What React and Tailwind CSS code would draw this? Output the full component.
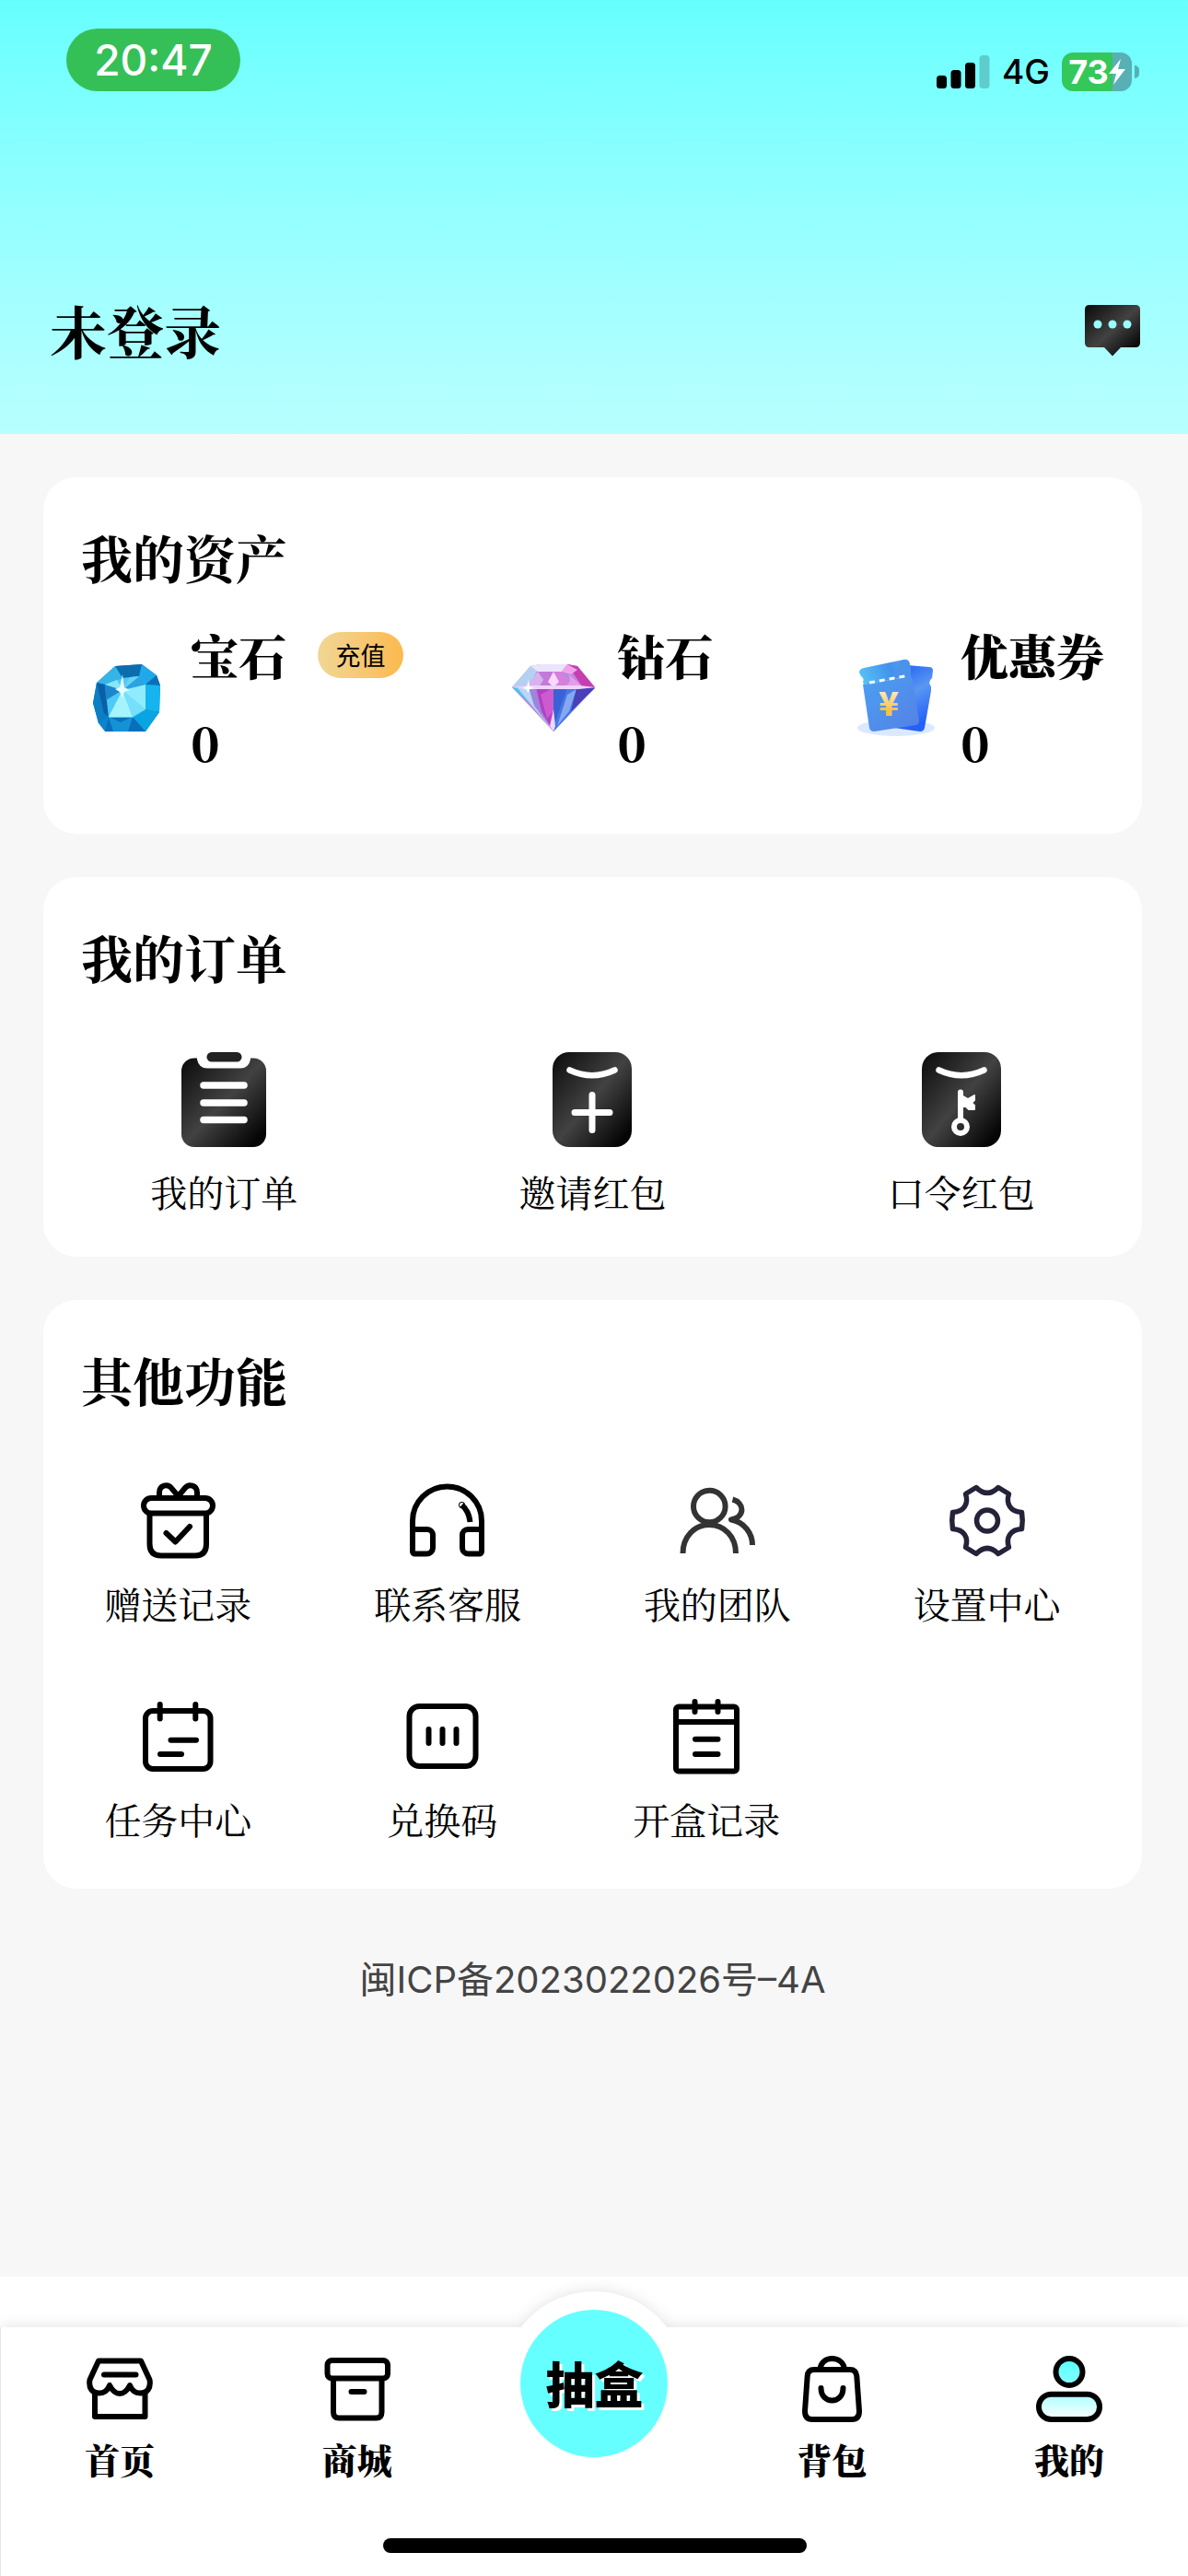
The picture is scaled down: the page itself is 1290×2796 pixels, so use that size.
const otherFeatures = [
  [
    { label: '赠送记录', icon: GiftIcon },
    { label: '联系客服', icon: HeadphonesIcon },
    { label: '我的团队', icon: TeamIcon },
    { label: '设置中心', icon: GearIcon },
  ],
  [
    { label: '任务中心', icon: CalendarIcon },
    { label: '兑换码', icon: CodeIcon, narrow: true },
    { label: '开盒记录', icon: NotebookIcon },
  ],
];

const orders = [
  { label: '我的订单', icon: ClipboardIcon },
  { label: '邀请红包', icon: InviteIcon },
  { label: '口令红包', icon: PasswordIcon },
];

function LineIcon({ color = '#000', size = 90, children }) {
  return (
    <svg
      width={size}
      height={size}
      viewBox={`0 0 ${size} ${size}`}
      fill="none"
      stroke={color}
      strokeWidth="6"
      strokeLinecap="round"
      strokeLinejoin="round"
      aria-hidden="true"
    >
      {children}
    </svg>
  );
}

function GiftIcon() {
  return (
    <LineIcon>
      <path d="M25 19V14C25 6 34 4 38 9L45.5 18L53 9C57 4 66 6 66 14V19" />
      <rect x="8" y="20" width="75" height="16.5" rx="8.2" />
      <path d="M14.5 38V70Q14.5 82.5 27 82.5H64Q76 82.5 76 70V38" />
      <path d="M32.5 58L42.5 67.5L58 51" />
    </LineIcon>
  );
}

function HeadphonesIcon() {
  return (
    <LineIcon>
      <path d="M7 54V45A37.5 37.5 0 0 1 82 45V54" />
      <path d="M7 54H23A6 6 0 0 1 29 60V74A6.5 6.5 0 0 1 22.5 80.5H9.5A2.5 2.5 0 0 1 7 78Z" />
      <path d="M82 54H67A6 6 0 0 0 61 60V74A6.5 6.5 0 0 0 67.5 80.5H79.5A2.5 2.5 0 0 0 82 78Z" />
      <path d="M60.5 27.5Q68 34 69.5 46" strokeLinecap="butt" />
      <circle cx="60.5" cy="27.5" r="0.5" />
    </LineIcon>
  );
}

function TeamIcon() {
  return (
    <LineIcon color="#333">
      <g strokeLinecap="butt">
        <circle cx="36.3" cy="29" r="17.3" />
        <path d="M7.5 80C7.5 62 20 49 36.3 49S65 62 65 80" />
        <path d="M61.5 21.5C74 25 76 40 60 43.5C74 46 83 58 83 71" />
      </g>
    </LineIcon>
  );
}

function GearIcon() {
  return (
    <LineIcon color="#25233a">
      <circle cx="45" cy="44.5" r="11.5" strokeWidth="5.5" />
      <path
        strokeWidth="5.5"
        d="M33 8.5L21.5 15.5C25 26 20 35 7.500 35.500Q6 44.5 7.500 53.500C20 54 25 63 21.5 73.5L33 80.5C41 72.5 49 72.5 57 80.5L68.5 73.5C65 63 70 54 82.500 53.500Q84 44.500 82.500 35.500C70 35 65 26 68.5 15.5L57 8.5C49 16.500 41 16.500 33 8.5Z"
      />
    </LineIcon>
  );
}

function CalendarIcon() {
  return (
    <LineIcon>
      <rect x="10" y="17" width="70.5" height="63" rx="8" />
      <path d="M25.7 10V25.5M64.3 10V25.5M37.5 48.7H65M26 64H49" />
    </LineIcon>
  );
}

function CodeIcon() {
  return (
    <LineIcon>
      <rect x="9.5" y="12" width="72" height="65" rx="11" />
      <path d="M30.5 37V52M45.5 37V52M60.5 37V52" />
    </LineIcon>
  );
}

function NotebookIcon() {
  return (
    <LineIcon>
      <rect x="12" y="12.5" width="66" height="70" rx="3" />
      <path d="M12 29H78M32.5 7V18M57.5 7V18M33 47.7H57.5M33 64H57.5" />
    </LineIcon>
  );
}

function DarkGradient({ id }) {
  return (
    <linearGradient id={id} x1="0" y1="0" x2="1" y2="1">
      <stop offset="0" stopColor="#0a0a0a" />
      <stop offset="0.5" stopColor="#424242" />
      <stop offset="0.9" stopColor="#050505" />
    </linearGradient>
  );
}

function ClipboardIcon() {
  return (
    <svg width="92" height="103" viewBox="0 0 92 103" aria-hidden="true">
      <defs>
        <DarkGradient id="clipboard" />
      </defs>
      <rect y="6.5" width="92" height="96.5" rx="14" fill="url(#clipboard)" />
      <path d="M17 0V8Q19 17.5 28 17.5H64Q73 17.5 75 8V0Z" fill="#fff" />
      <rect x="27.5" width="38" height="10.5" rx="5.2" fill="#222" />
      <path d="M24 36H68M24 55H68M24 73.5H68" stroke="#fff" strokeWidth="7.5" strokeLinecap="round" />
    </svg>
  );
}

function InviteIcon() {
  return (
    <svg width="86" height="103" viewBox="0 0 86 103" fill="none" stroke="#fff" strokeLinecap="round" aria-hidden="true">
      <defs>
        <DarkGradient id="invite" />
      </defs>
      <rect width="86" height="103" rx="18" fill="url(#invite)" stroke="none" />
      <path d="M18.5 19.5Q43 31 67.5 19.5" strokeWidth="6.5" />
      <path d="M43 46.5V84.5M24 65.5H62" strokeWidth="7" />
    </svg>
  );
}

function PasswordIcon() {
  return (
    <svg width="86" height="103" viewBox="0 0 86 103" fill="none" stroke="#fff" strokeLinecap="round" aria-hidden="true">
      <defs>
        <DarkGradient id="password" />
      </defs>
      <rect width="86" height="103" rx="18" fill="url(#password)" stroke="none" />
      <path d="M18.5 19.5Q43 31 67.5 19.5" strokeWidth="6.5" />
      <path d="M42 43.5V73" strokeWidth="6" />
      <circle cx="42" cy="81" r="7" strokeWidth="6" />
      <path d="M43 47L50 51L57 47V52L54 55L57 58V62H51L48 59H43Z" fill="#fff" strokeWidth="2" strokeLinejoin="round" />
    </svg>
  );
}

function ChatIcon() {
  return (
    <svg width="60" height="56" viewBox="0 0 60 56" aria-hidden="true">
      <defs>
        <DarkGradient id="chat" />
      </defs>
      <path d="M5 0H55Q60 0 60 5V41Q60 46 55 46H39L30 55.5L21 46H5Q0 46 0 41V5Q0 0 5 0Z" fill="url(#chat)" />
      <g fill="#9ff">
        <circle cx="14" cy="21" r="4.5" />
        <circle cx="30" cy="21" r="4.5" />
        <circle cx="46" cy="21" r="4.5" />
      </g>
    </svg>
  );
}

function GemIcon() {
  return (
    <svg width="92" height="92" viewBox="0 0 92 92" aria-hidden="true">
      <path d="M34 11L63 9L79 21L83 32L82 61L67 82H23L16 73L10 51L14 29Z" fill="#0a86cf" />
      <path d="M34 11L63 9L60 22L42 24Z" fill="#0b6cae" />
      <path d="M34 11L42 24L23 31L14 29Z" fill="#35b4e8" />
      <path d="M63 9L79 21L67 31L60 22Z" fill="#1fa9ea" />
      <path d="M79 21L83 32L67 31Z" fill="#0b6fb8" />
      <path d="M83 32L82 61L67 58V31Z" fill="#15b4ee" />
      <path d="M82 61L67 82L53 67L67 58Z" fill="#0aa4e2" />
      <path d="M67 82H23L27 66H53Z" fill="#0a6fbb" />
      <path d="M27 66L40 72L53 66L48 82H32Z" fill="#1592d6" />
      <path d="M16 73L10 51L14 29L22 40L27 66Z" fill="#0c7fc4" />
      <path d="M14 29L23 31L27 66L22 62Z" fill="#0a5fa6" />
      <path d="M23 31L42 24L60 22L67 31V58L53 67H27Z" fill="#4fc9f6" />
      <path d="M42 37L27 66H53Z" fill="#a5f3fd" />
      <path d="M42 37L53 66L67 58Z" fill="#74e0fb" />
      <path d="M42 37L67 31V58Z" fill="#8fecfd" />
      <path d="M42 37L60 22L67 31Z" fill="#2ba3e0" />
      <path d="M42 37L50 23L60 22Z" fill="#69d3f5" />
      <path d="M42 37L23 31L24 48Z" fill="#1d87cd" />
      <path d="M42 37L23 31L36 26Z" fill="#8ae4fa" />
      <path d="M42 20L44 34L50 37L44 39L42 46L39 39L34 36L39 34Z" fill="#e5fdff" />
    </svg>
  );
}

function DiamondIcon() {
  return (
    <svg width="92" height="92" viewBox="0 0 92 92" aria-hidden="true">
      <path d="M22 11L33 9H62L73 11L92 34L47 82L2 34Z" fill="#b98ae0" />
      <path d="M22 11L33 9L20 34H2Z" fill="#b5d0f3" />
      <path d="M22 11L33 9H62L56 17H30Z" fill="#ece4fb" />
      <path d="M62 9L73 11L92 34L78 33L68 18Z" fill="#c53fb0" />
      <path d="M56 17L62 9L73 15L66 20Z" fill="#f0a3ea" />
      <path d="M30 17L36 26L31 34L18 33Z" fill="#d8b2ee" />
      <path d="M30 17H47V34H31L37 25Z" fill="#c37ad9" />
      <path d="M47 17H56L64 27L60 34H47Z" fill="#d67fdd" />
      <path d="M47 17L53 28L47 34L41 28Z" fill="#fbd8f8" />
      <path d="M64 20L78 33L60 34L65 27Z" fill="#e79be8" />
      <path d="M2 34H20L30 59Z" fill="#4cc3ec" />
      <path d="M8 35L20 34L47 82Z" fill="#b9d6f7" />
      <path d="M20 34H28L47 82L26 54Z" fill="#9c86dd" />
      <path d="M28 34H47V82L34 60Z" fill="#b63fc1" />
      <path d="M33 42L47 34V60L40 68Z" fill="#cc5bcf" />
      <path d="M47 34H92L47 82Z" fill="#4478e2" />
      <path d="M47 34H62L58 46L47 76Z" fill="#3a62d6" />
      <path d="M62 42L72 36L64 60L51 76Z" fill="#86a8f3" />
      <path d="M72 35H92L66 60Z" fill="#4b40b8" />
      <path d="M47 58L49 76L47 82L43 76Z" fill="#f1d5fa" />
      <path d="M2 34L20 32H75L92 34L75 36H20Z" fill="#eed3fa" />
      <path d="M20 26L21 33L26 35L21 36L20 40L17 36L13 35L18 33Z" fill="#fff" />
    </svg>
  );
}

function CouponIcon() {
  return (
    <svg width="92" height="92" viewBox="0 0 92 92" aria-hidden="true">
      <defs>
        <linearGradient id="couponTop" x1="0" y1="0.5" x2="1" y2="0.3">
          <stop offset="0" stopColor="#56c1f3" />
          <stop offset="0.6" stopColor="#4291ec" />
          <stop offset="1" stopColor="#5aa3f2" />
        </linearGradient>
        <linearGradient id="couponFront" x1="0" y1="0" x2="1" y2="1">
          <stop offset="0" stopColor="#4aa0f2" />
          <stop offset="1" stopColor="#5580e6" />
        </linearGradient>
        <linearGradient id="couponBack" x1="0" y1="0" x2="0.3" y2="1">
          <stop offset="0" stopColor="#1d5df5" />
          <stop offset="0.5" stopColor="#5a97f2" />
          <stop offset="1" stopColor="#2460f8" />
        </linearGradient>
        <linearGradient id="yuan" x1="0" y1="0" x2="0" y2="1">
          <stop offset="0.2" stopColor="#fff3d6" />
          <stop offset="0.7" stopColor="#f9bf43" />
        </linearGradient>
      </defs>
      <ellipse cx="46" cy="78" rx="42" ry="9" fill="#dbe9ff" />
      <path d="M58 10L82 12Q86 12 86 16L85 24Q80 28 84 33L84 38L77 78Q76 82 72 82L44 78Z" fill="url(#couponBack)" />
      <path d="M11 13L54 4Q60 3 61 9L62 22L11 31L10 28Q12 25 8 22L6 18Q6 14 11 13Z" fill="url(#couponTop)" />
      <path d="M39 24Q47 18 51 5L56 4Q60 4 61 9L62 22Z" fill="#4a93ea" />
      <path d="M10 31L62 22Q64 24 64 28L71 70Q71 75 67 75L22 82Q18 82 17 78Z" fill="url(#couponFront)" />
      <path d="M17 29L60 21" stroke="#fff" strokeWidth="3" strokeDasharray="6 5" />
      <text x="38" y="65" textAnchor="middle" fontSize="36" fontWeight="900" fontFamily="Noto Sans CJK SC, sans-serif" fill="url(#yuan)">
        ¥
      </text>
    </svg>
  );
}

function ShopIcon() {
  return (
    <LineIcon size={72}>
      <path d="M13 5.5H59L68.5 26C70 35 66 40.5 58 40.5C53 40.5 49 37 47 32C44 38 41 41 36 41S28 38 25 32C23 37 19 40.5 14 40.5C6 40.5 2 35 3.5 26Z" />
      <path d="M9 41V66H63.5V41M19 20.5H53.5" />
    </LineIcon>
  );
}

function MallIcon() {
  return (
    <LineIcon size={72}>
      <rect x="3.5" y="5" width="65.5" height="19.5" rx="5" />
      <path d="M10 26V61Q10 67.5 16 67.5H56.5Q62.5 67.5 62.5 61V26M29.5 39H43.5" />
    </LineIcon>
  );
}

function BagIcon() {
  return (
    <LineIcon size={72}>
      <path d="M17 15H56Q62.5 15 63.3 22L66 60Q66 69 58 69H15Q7 69 7 60L9.7 22Q10.3 15 17 15Z" />
      <path d="M23.5 15C24 7 30 3 36.5 3S49.5 7 50 15" />
      <path d="M24.5 35C24.5 53 48.5 53 48.5 35" />
    </LineIcon>
  );
}

function MeIcon() {
  return (
    <LineIcon size={72}>
      <defs>
        <linearGradient id="meHead" x1="0" y1="0" x2="0" y2="1">
          <stop offset="0" stopColor="#5ff" />
          <stop offset="1" stopColor="#8ff" />
        </linearGradient>
        <linearGradient id="meBody" x1="0" y1="0" x2="0" y2="1">
          <stop offset="0" stopColor="#aff" />
          <stop offset="1" stopColor="#fff" />
        </linearGradient>
      </defs>
      <circle cx="36" cy="17.5" r="14.5" fill="url(#meHead)" />
      <rect x="3" y="41.7" width="66" height="27.3" rx="13.6" fill="url(#meBody)" />
    </LineIcon>
  );
}

function StatusBar() {
  return (
    <div className="flex items-end justify-between pt-[31px] pr-[53px] pl-[72px] font-['Inter',sans-serif]">
      <span className="flex h-[68px] w-[189px] items-center justify-center rounded-full bg-[#35c057] text-[46px] font-medium text-white">
        20:47
      </span>
      <div className="flex items-center gap-[13px]">
        <svg width="58" height="36" viewBox="0 0 58 36" aria-hidden="true">
          <rect y="22" width="11" height="14" rx="3.5" />
          <rect x="15.5" y="16" width="11" height="20" rx="3.5" />
          <rect x="31" y="8" width="11" height="28" rx="3.5" />
          <rect x="46.5" width="11" height="36" rx="3.5" opacity="0.2" />
        </svg>
        <span className="text-[37px] leading-[42px] font-medium">4G</span>
        <div className="flex items-center gap-[3px]">
          <div className="flex h-[42px] w-[76px] items-center justify-center rounded-[12px] bg-linear-to-r from-[#34c759] from-73% to-[#58b0b4] to-73% text-[36px] font-bold text-white">
            73
            <svg width="18" height="28" viewBox="0 0 18 28" fill="#fff" aria-hidden="true">
              <path d="M13 0L0 16H8L5 28L18 11H10Z" />
            </svg>
          </div>
          <div className="h-[14px] w-[5px] rounded-r-full bg-[#58b0b4]" />
        </div>
      </div>
    </div>
  );
}

function Card({ title, children }) {
  return (
    <section className="rounded-[36px] bg-white pt-[50px]">
      <h2 className="pl-[41px] text-[56px] leading-[72px] font-bold">{title}</h2>
      {children}
    </section>
  );
}

function Asset({ icon, name, action }) {
  return (
    <div className="flex items-center gap-6">
      {icon}
      <div className="text-[52px] leading-[94px] font-black whitespace-nowrap">
        <div className="flex items-center gap-[34px]">
          {name}
          {action}
        </div>
        <div>0</div>
      </div>
    </div>
  );
}

function Tab({ label, icon }) {
  return (
    <a href="#" className="flex flex-1 flex-col items-center gap-4 pt-[31px]">
      {icon}
      <span className="text-[38px] leading-[48px] font-black">{label}</span>
    </a>
  );
}

export default function App() {
  return (
    <div className="flex min-h-screen flex-col bg-[#f7f7f7] font-['Noto_Serif_CJK_SC','Noto_Sans_CJK_SC',serif] text-black">
      <header className="bg-linear-to-b from-[#66ffff] to-[#b8ffff] pb-[72px]">
        <StatusBar />
        <div className="mt-[220px] flex items-center justify-between pr-[52px] pl-[54px]">
          <h1 className="text-[62px] leading-[80px] font-bold">未登录</h1>
          <button type="button" aria-label="消息">
            <ChatIcon />
          </button>
        </div>
      </header>

      <main className="flex flex-1 flex-col gap-[47px] pt-[47px] pr-[50px] pl-[47px]">
        <Card title="我的资产">
          <div className="mt-6 grid grid-cols-[46fr_37fr_27fr] pr-[41px] pb-[53px] pl-[44px]">
            <Asset
              icon={<GemIcon />}
              name="宝石"
              action={
                <button
                  type="button"
                  className="h-[50px] w-[93px] rounded-full bg-linear-to-r from-[#f0d795] to-[#fcb94d] font-['Noto_Sans_CJK_SC',sans-serif] text-[27px] leading-[50px] font-normal"
                >
                  充值
                </button>
              }
            />
            <Asset icon={<DiamondIcon />} name="钻石" />
            <Asset icon={<CouponIcon />} name="优惠券" />
          </div>
        </Card>

        <Card title="我的订单">
          <div className="-mx-1 mt-[68px] grid grid-cols-3 pb-[43px]">
            {orders.map(({ label, icon: Icon }) => (
              <a key={label} href="#" className="flex flex-col items-center gap-5">
                <Icon />
                <span className="text-[40px] leading-[56px]">{label}</span>
              </a>
            ))}
          </div>
        </Card>

        <Card title="其他功能">
          <div className="mt-[73px] flex flex-col gap-[72px] pr-[22px] pb-12">
            {otherFeatures.map((row, i) => (
              <div key={i} className="flex">
                {row.map(({ label, icon: Icon, narrow }) => (
                  <a
                    key={label}
                    href="#"
                    className={`flex flex-col items-center gap-4 ${narrow ? 'w-[24%]' : 'w-1/4'}`}
                  >
                    <Icon />
                    <span className="text-[40px] leading-[56px]">{label}</span>
                  </a>
                ))}
              </div>
            ))}
          </div>
        </Card>

        <p className="mt-6 text-center font-['Inter','Noto_Sans_CJK_SC',sans-serif] text-[40px] leading-[56px] text-[#444]">
          闽ICP备2023022026号–4A
        </p>
      </main>

      <footer className="bg-white pt-[55px]">
        <div className="relative drop-shadow-[0_0_8px_rgba(0,0,0,0.12)]">
          {/* raised bump behind the draw button */}
          <div className="absolute -top-[39px] left-1/2 size-[200px] -translate-x-1/2 rounded-full bg-white" />
          <div className="relative border-l border-[#e5e5e5] bg-white pb-[25px]">
            <nav className="flex">
              <Tab label="首页" icon={<ShopIcon />} />
              <Tab label="商城" icon={<MallIcon />} />
              <div className="relative flex-1">
                <button
                  type="button"
                  className="absolute -top-[19px] left-1/2 size-[160px] -translate-x-1/2 rounded-full bg-[#66ffff] font-['Noto_Sans_CJK_SC',sans-serif] text-[53px] font-black [text-shadow:3px_3px_0_#fff]"
                >
                  抽盒
                </button>
              </div>
              <Tab label="背包" icon={<BagIcon />} />
              <Tab label="我的" icon={<MeIcon />} />
            </nav>
            <div className="mx-auto mt-[62px] h-4 w-[460px] rounded-full bg-black" />
          </div>
        </div>
      </footer>
    </div>
  );
}
